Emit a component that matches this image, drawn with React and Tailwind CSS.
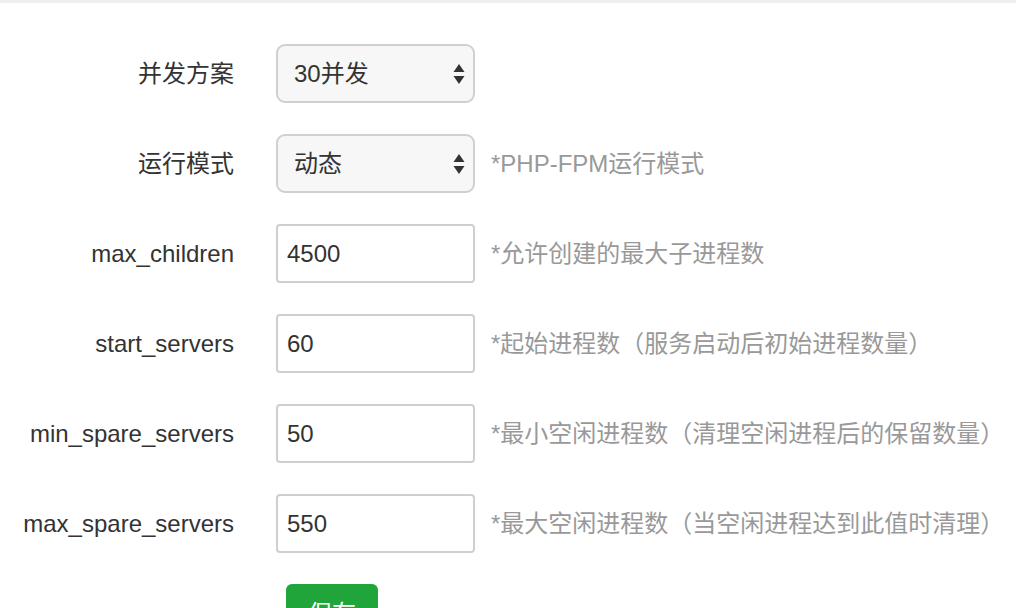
const rows = [
  { label: '并发方案', type: 'select', value: '30并发', hint: '' },
  { label: '运行模式', type: 'select', value: '动态', hint: '*PHP-FPM运行模式' },
  { label: 'max_children', type: 'input', value: '4500', hint: '*允许创建的最大子进程数' },
  { label: 'start_servers', type: 'input', value: '60', hint: '*起始进程数（服务启动后初始进程数量）' },
  { label: 'min_spare_servers', type: 'input', value: '50', hint: '*最小空闲进程数（清理空闲进程后的保留数量）' },
  { label: 'max_spare_servers', type: 'input', value: '550', hint: '*最大空闲进程数（当空闲进程达到此值时清理）' },
]

function SelectArrows() {
  return (
    <svg className="w-[12px] h-[22px] shrink-0" viewBox="0 0 12 22" aria-hidden="true">
      <path d="M6 1 L11.5 9 H0.5 Z" fill="#333" />
      <path d="M6 21 L11.5 13 H0.5 Z" fill="#333" />
    </svg>
  )
}

function Field({ type, value }) {
  if (type === 'select') {
    return (
      <div className="w-[199px] h-[59px] shrink-0 flex items-center justify-between pl-[16px] pr-[8px] bg-[#f7f7f7] border-2 border-[#d0d0d0] rounded-[9px] text-[#333]">
        <span>{value}</span>
        <SelectArrows />
      </div>
    )
  }
  return (
    <div className="w-[199px] h-[59px] shrink-0 flex items-center pl-[9px] bg-white border-2 border-[#cfcfcf] rounded-[4px] text-[#333]">
      {value}
    </div>
  )
}

export default function App() {
  return (
    <div
      className="w-[1016px] h-[608px] overflow-hidden bg-white border-t-[3px] border-[#efefef] text-[24px] leading-none"
      style={{ fontFamily: '"Liberation Sans", "Noto Sans CJK SC", sans-serif' }}
    >
      <div className="flex flex-col gap-[31px] pt-[41px]">
        {rows.map((r) => (
          <div key={r.label} className="flex items-center">
            <div className="w-[235px] shrink-0 text-right text-[#333] pr-px">{r.label}</div>
            <div className="ml-[41px]">
              <Field type={r.type} value={r.value} />
            </div>
            {r.hint && <div className="ml-[16px] text-[#999] whitespace-nowrap">{r.hint}</div>}
          </div>
        ))}
        <div className="pl-[286px]">
          <button
            type="button"
            className="w-[92px] h-[60px] bg-[#20a53a] text-white rounded-[6px] flex items-center justify-center"
          >
            保存
          </button>
        </div>
      </div>
    </div>
  )
}
